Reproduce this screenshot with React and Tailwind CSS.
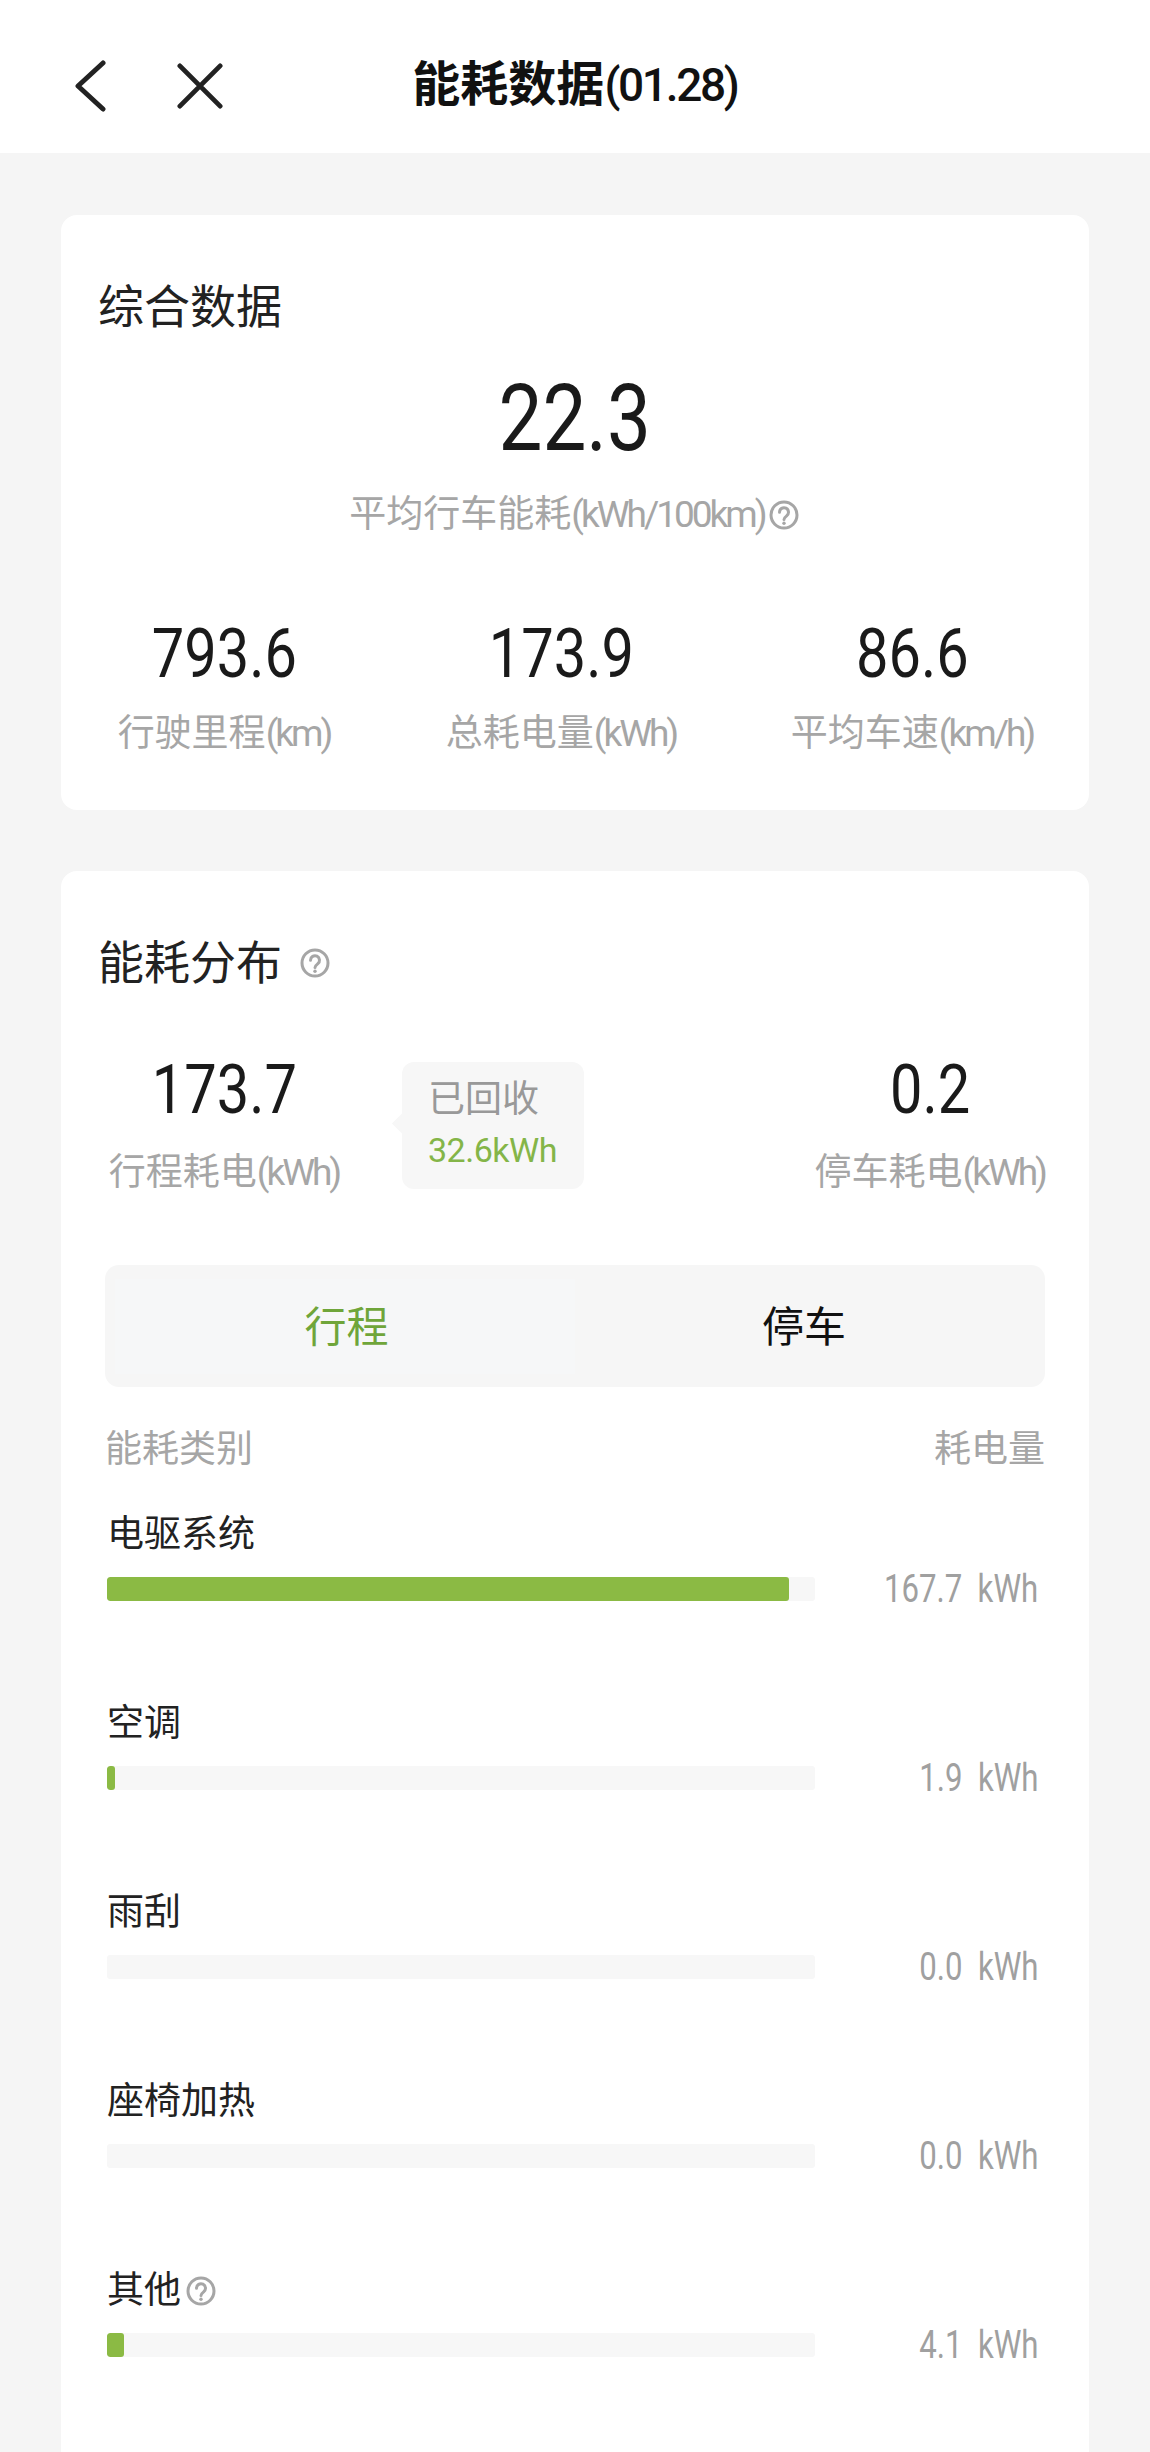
const Help = ({ className }) => (
  <svg viewBox="0 0 30 30" className={className} fill="none" stroke="#a6a6a6">
    <circle cx="15" cy="15" r="13" strokeWidth="3" />
    <path d="M10.5 12.2a4.5 4.5 0 1 1 7.2 3.6c-1.6 1.2-2.7 2-2.7 3.8" strokeWidth="3" strokeLinecap="round" />
    <circle cx="15" cy="23.2" r="1.7" fill="#a6a6a6" stroke="none" />
  </svg>
);

// the screenshot's digits are narrower than any installed face
const Num = ({ children }) => <span className="inline-block scale-x-[.85]">{children}</span>;

const Label = ({ cn, unit }) => (
  <div className="text-[37px] leading-[44px] text-[#a6a6a6] whitespace-nowrap">
    {cn}
    <span className="tracking-[-3px]">{unit}</span>
  </div>
);

const Stat = ({ value, cn, unit, gap }) => (
  <div className="flex flex-col items-center">
    <div className={`text-[68px] leading-[80px] text-[#1a1a1a] ${gap}`}>
      <Num>{value}</Num>
    </div>
    <Label cn={cn} unit={unit} />
  </div>
);

const rows = [
  { name: "电驱系统", value: "167.7", fill: "w-[682px]" },
  { name: "空调", value: "1.9", fill: "w-[8px]" },
  { name: "雨刮", value: "0.0", fill: "w-0" },
  { name: "座椅加热", value: "0.0", fill: "w-0" },
  { name: "其他", value: "4.1", fill: "w-[17px]", help: true },
];

export default function App() {
  return (
    <div className="w-[1150px] h-[2452px] overflow-hidden bg-[#f5f5f5] font-['Roboto','Noto_Sans_CJK_SC',sans-serif]">
      <header className="relative h-[153px] bg-white flex items-center justify-center pt-[16px]">
        <div className="absolute left-[73px] top-[60px] flex items-center gap-[70px]">
          <svg viewBox="0 0 34 52" className="w-[34px] h-[52px]" fill="none" stroke="#222" strokeWidth="5" strokeLinecap="round" strokeLinejoin="round">
            <path d="M30 3 5 26l25 23" />
          </svg>
          <svg viewBox="0 0 48 48" className="w-[46px] h-[46px]" fill="none" stroke="#222" strokeWidth="5" strokeLinecap="round">
            <path d="M3 3l42 42M45 3 3 45" />
          </svg>
        </div>
        <h1 className="text-[48px] leading-[60px] font-bold text-[#111] whitespace-nowrap">
          能耗数据<span className="text-[46px] font-medium tracking-[-2.3px]">(01.28)</span>
        </h1>
      </header>

      <section className="mx-[61px] mt-[62px] h-[595px] bg-white rounded-[16px] pt-[67px]">
        <h2 className="ml-[37px] text-[46px] leading-[50px] text-[#222]">综合数据</h2>
        <div className="mt-[37px] text-center text-[92px] leading-[100px] text-[#1a1a1a]">
          <Num>22.3</Num>
        </div>
        <div className="mt-[24px] flex items-center justify-center gap-[4px] pr-[2px]">
          <Label cn="平均行车能耗" unit="(kWh/100km)" />
          <Help className="w-[30px] h-[30px]" />
        </div>
        <div className="mt-[77px] grid grid-cols-[326px_348px_354px]">
          <Stat value="793.6" cn="行驶里程" unit="(km)" gap="mb-[18px]" />
          <Stat value="173.9" cn="总耗电量" unit="(kWh)" gap="mb-[18px]" />
          <Stat value="86.6" cn="平均车速" unit="(km/h)" gap="mb-[18px]" />
        </div>
      </section>

      <section className="mx-[61px] mt-[61px] h-[1600px] bg-white rounded-[16px] pt-[67px] px-[44px]">
        <div className="flex items-center gap-[18px] -ml-[7px]">
          <h2 className="text-[46px] leading-[50px] text-[#222]">能耗分布</h2>
          <Help className="w-[30px] h-[30px]" />
        </div>

        <div className="relative mt-[62px] h-[215px]">
          <div className="absolute left-0 top-0 w-[238px]">
            <Stat value="173.7" cn="行程耗电" unit="(kWh)" gap="mb-[21px]" />
          </div>
          <div className="absolute left-[297px] top-[12px] w-[182px] h-[127px] bg-[#f7f7f7] rounded-[12px] pl-[26px] pt-[16px]">
            <div className="absolute left-[-7px] top-[54px] w-[15px] h-[15px] rotate-45 bg-[#f7f7f7]" />
            <div className="relative text-[37px] leading-[44px] text-[#999]">已回收</div>
            <div className="relative mt-[6px] text-[34px] leading-[44px] tracking-[-0.5px] text-[#84b548]">32.6kWh</div>
          </div>
          <div className="absolute right-0 top-0">
            <Stat value="0.2" cn="停车耗电" unit="(kWh)" gap="mb-[21px]" />
          </div>
        </div>

        <div className="h-[122px] rounded-[14px] bg-[#f6f6f6] flex items-center text-[42px]">
          <div className="ml-[10px] w-[461px] h-[95px] bg-[#f6f7f8] flex items-center justify-center pl-[3px] pt-[3px] text-[#6fa53a]">行程</div>
          <div className="w-[471px] flex items-center justify-center pr-[12px] pt-[3px] text-[#111]">停车</div>
        </div>

        <div className="mt-[41px] flex justify-between text-[37px] leading-[44px] text-[#a6a6a6]">
          <span>能耗类别</span>
          <span>耗电量</span>
        </div>

        <div className="mt-[41px] flex flex-col gap-[95px]">
          {rows.map((row) => (
            <div key={row.name}>
              <div className="flex items-center gap-[5px] pl-[2px] text-[37px] leading-[44px] text-[#222]">
                <span>{row.name}</span>
                {row.help && <Help className="w-[30px] h-[30px]" />}
              </div>
              <div className="mt-[14px] flex items-center">
                <div className="ml-[2px] w-[708px] h-[24px] rounded-[3px] bg-[#f7f7f7] overflow-hidden">
                  <div className={`h-full rounded-[3px] bg-[#8bba44] ${row.fill}`} />
                </div>
                <div className="flex-1 text-right pr-[7px] text-[38px] leading-[36px] text-[#a0a0a0] whitespace-pre">
                  <span className="inline-block origin-right scale-x-[.82]">{row.value}  kWh</span>
                </div>
              </div>
            </div>
          ))}
        </div>
      </section>
    </div>
  );
}
